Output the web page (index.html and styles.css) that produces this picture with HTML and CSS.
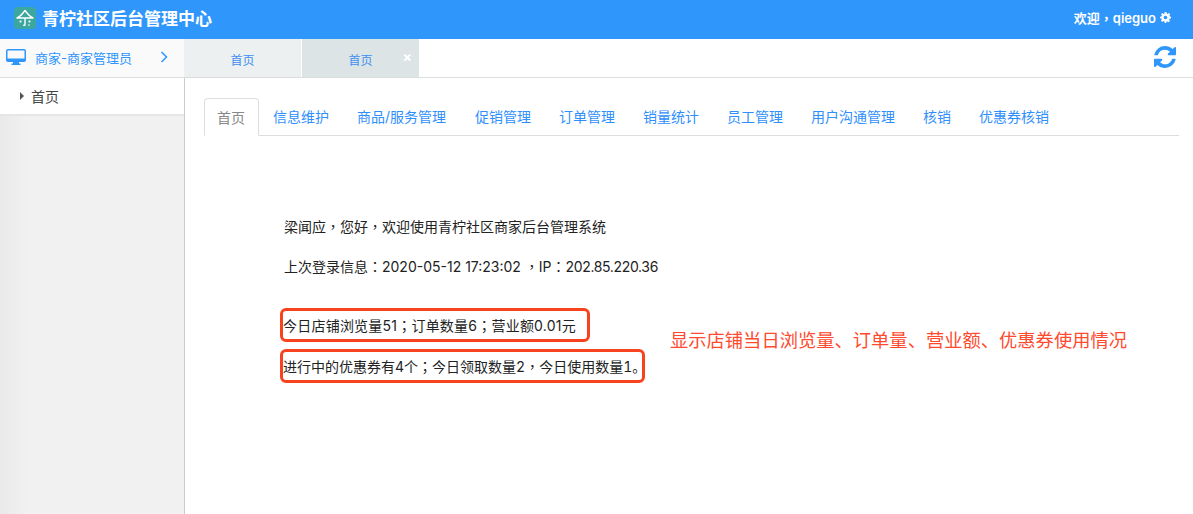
FILE: index.html
```html
<!DOCTYPE html>
<html lang="zh-CN">
<head>
  <meta charset="UTF-8" />
  <title>青柠社区后台管理中心</title>
  <link rel="stylesheet" href="styles.css">
</head>
<body>

  <!-- Top bar -->
  <header class="topbar">
    <div class="brand">
      <svg class="logo" viewBox="0 0 22 22" width="22" height="22">
        <rect width="22" height="22" rx="4" fill="#3ba79f"/>
        <path d="M3 11 Q6.500 9.500 11 3.500 Q15.500 9.500 19 11 Z" fill="none" stroke="#fff" stroke-width="1.400" stroke-linejoin="round"/>
        <path d="M11 11 V17.500 Q11 18.800 9.300 18" fill="none" stroke="#fff" stroke-width="1.400"/>
        <circle cx="6.500" cy="14.500" r="1.100" fill="#fff"/>
        <circle cx="15.500" cy="14.500" r="1.100" fill="#fff"/>
        <circle cx="15" cy="18" r="0.800" fill="#fff"/>
      </svg>
      <span>青柠社区后台管理中心</span>
    </div>
    <div class="welcome">
      <span>欢迎<span lang="zh-TW">，</span>qieguo</span>
      <svg viewBox="0 0 24 24" width="11" height="11">
        <path fill="#fff" fill-rule="evenodd" d="M10 0h4l.6 3.200 2.200.9L19.500 2.300l2.800 2.800-1.800 2.700.9 2.200L24 10.600v3.400l-3.200.6-.9 2.200 1.800 2.700-2.800 2.800-2.700-1.800-2.200.9L13.400 24h-3l-.6-3.200-2.200-.9-2.700 1.800-2.800-2.800 1.800-2.700-.9-2.200L0 13.400v-3l3.200-.6.900-2.200L2.300 5.100l2.800-2.800 2.700 1.800 2.200-.9zM12 8a4 4 0 1 0 0 8 4 4 0 0 0 0-8z"/>
      </svg>
    </div>
  </header>

  <!-- Second row: role + open pages -->
  <div class="subbar">
    <div class="role">
      <svg viewBox="0 0 20 18" width="20" height="18">
        <path fill="#2f96fc" fill-rule="evenodd" d="M2 1h16a2 2 0 0 1 2 2v9a2 2 0 0 1-2 2h-5v1.500h1.500V17h-9v-1.500H7V14H2a2 2 0 0 1-2-2V3a2 2 0 0 1 2-2zm0 1.600a.5.5 0 0 0-.5.5V10.500h17V3.100a.5.5 0 0 0-.5-.5z"/>
      </svg>
      <span class="role-name">商家-商家管理员</span>
      <svg class="chevron" viewBox="0 0 8 12" width="8" height="12">
        <path d="M1.500 1 L6.500 6 L1.500 11" fill="none" stroke="#2f96fc" stroke-width="1.500"/>
      </svg>
    </div>
    <div class="page-tab">首页</div>
    <div class="page-tab active">首页<span class="close">×</span></div>
    <div class="refresh">
      <svg viewBox="0 0 1536 1536" width="22" height="22">
        <path fill="#2f96fc" d="M1511 928q0 5-1 7-64 268-268 434.500T764 1536q-146 0-282.500-55T238 1324l-129 129q-19 19-45 19t-45-19-19-45V960q0-26 19-45t45-19h448q26 0 45 19t19 45-19 45L420 1142q71 66 161 102t187 36q134 0 250-65t186-179q11-17 53-117 8-23 30-23h192q13 0 22.500 9.500t9.500 22.500zm25-800v448q0 26-19 45t-45 19h-448q-26 0-45-19t-19-45 19-45l138-138q-148-137-349-137-134 0-250 65T332 500q-11 17-53 117-8 23-30 23H50q-13 0-22.500-9.500T18 608v-7q65-268 270-434.500T768 0q146 0 284 55.500T1297 212l130-129q19-19 45-19t45 19 19 45z"/>
      </svg>
    </div>
  </div>

  <div class="main">
    <!-- Sidebar -->
    <aside class="sidebar">
      <div class="side-item"><span class="arrow"></span>首页</div>
    </aside>

    <!-- Content -->
    <section class="content">
      <ul class="tabs">
        <li class="active">首页</li>
        <li>信息维护</li>
        <li class="wide">商品/服务管理</li>
        <li>促销管理</li>
        <li>订单管理</li>
        <li>销量统计</li>
        <li>员工管理</li>
        <li>用户沟通管理</li>
        <li>核销</li>
        <li>优惠券核销</li>
      </ul>

      <div class="info">
        <p class="greeting">梁闻应<span lang="zh-TW">，</span>您好<span lang="zh-TW">，</span>欢迎使用青柠社区商家后台管理系统</p>
        <p class="login">上次登录信息<span lang="zh-TW">：</span>2020-05-12 17:23:02 <span lang="zh-TW">，</span>IP<span lang="zh-TW">：</span><span class="ip">202.85.220.36</span></p>

        <div class="stats">
          <div class="stat-lines">
            <div class="stat stat-a"><span>今日店铺浏览量51<span lang="zh-TW">；</span>订单数量6<span lang="zh-TW">；</span>营业额0.01元</span></div>
            <div class="stat stat-b"><span>进行中的优惠券有4个<span lang="zh-TW">；</span>今日领取数量2<span lang="zh-TW">，</span>今日使用数量1。</span></div>
          </div>
          <div class="note">显示店铺当日浏览量、订单量、营业额、优惠券使用情况</div>
        </div>
      </div>
    </section>
  </div>

</body>
</html>
```

FILE: styles.css
```css
* {
  box-sizing: border-box;
}

html,
body {
  height: 100%;
}

body {
  margin: 0;
  display: flex;
  flex-direction: column;
  overflow: hidden;
  font-family: Inter, "Noto Sans CJK SC", sans-serif;
  font-size: 14px;
  color: #333;
  background-color: #fff;
}

.topbar {
  height: 39px;
  flex: none;
  display: flex;
  align-items: center;
  justify-content: space-between;
  padding: 0 22px 4px 14px;
  background-color: #2f96fc;
  color: #fff;
}

.brand {
  display: flex;
  align-items: center;
  gap: 6px;
  font-size: 17px;
  font-weight: bold;
}

.logo {
  display: block;
}

.welcome {
  display: flex;
  align-items: center;
  gap: 4px;
  font-size: 13px;
  font-weight: 600;
}

.subbar {
  height: 39px;
  flex: none;
  display: flex;
  border-bottom: 1px solid #ddd;
}

.role {
  width: 184px;
  display: flex;
  align-items: center;
  padding: 0 16px 2px 6px;
  background-color: #fafafa;
  font-size: 13px;
  color: #2f96fc;
}

.role-name {
  flex: 1;
  margin-left: 9px;
}

.page-tab {
  position: relative;
  width: 118px;
  display: flex;
  align-items: center;
  justify-content: center;
  padding-top: 2px;
  background-color: #ecf0f1;
  border-right: 1px solid #fff;
  font-size: 12px;
  color: #3f8ff0;
}

.page-tab.active {
  width: 117px;
  border-right: none;
  background-color: #dce4e6;
}

.close {
  position: absolute;
  top: 10px;
  right: 7px;
  font-size: 14px;
  line-height: 16px;
  font-weight: bold;
  color: #fff;
}

.refresh {
  margin-left: auto;
  display: flex;
  align-items: center;
  padding: 0 17px 2px 0;
}

.main {
  flex: 1;
  display: flex;
  min-height: 0;
}

.sidebar {
  width: 185px;
  flex: none;
  background: linear-gradient(to right, #e9e9e9, #f1f1f1 28px);
  border-right: 1px solid #ccc;
}

.side-item {
  height: 38px;
  display: flex;
  align-items: center;
  padding-left: 20px;
  padding-bottom: 1px;
  background-color: #fff;
  border-bottom: 2px solid #e6e6e6;
  color: #444;
}

.arrow {
  width: 0;
  height: 0;
  margin-right: 7px;
  border-style: solid;
  border-width: 4px 0 4px 4px;
  border-color: transparent transparent transparent #555;
}

.content {
  flex: 1;
  min-width: 0;
  padding: 20px 14px 0 19px;
}

.tabs {
  display: flex;
  height: 38px;
  margin: 0;
  padding: 0;
  list-style-type: none;
  border-bottom: 1px solid #ddd;
}

.tabs li {
  height: 38px;
  padding: 0 14px;
  line-height: 38px;
  color: #2f8ffc;
}

.tabs li.wide {
  padding-right: 15px;
}

.tabs li.active {
  width: 55px;
  padding: 0 1px 0 0;
  text-align: center;
  color: #888;
  background-color: #fff;
  border: 1px solid #ddd;
  border-bottom-color: #fff;
  border-radius: 4px 4px 0 0;
}

.info {
  padding: 81px 0 0 80px;
  color: #222;
}

.info p {
  margin: 0;
  line-height: 20px;
}

.info p.login {
  margin-top: 20px;
}

.ip {
  letter-spacing: -0.35px;
}

.stats {
  display: flex;
  align-items: center;
  margin-top: 31px;
}

.stat-lines {
  display: flex;
  flex-direction: column;
  gap: 7px;
  align-items: flex-start;
}

.stat {
  height: 34px;
  display: flex;
  align-items: center;
  white-space: nowrap;
  border: 3px solid #f8431f;
  border-radius: 6px;
  margin-left: -4px;
}

.stat-a {
  width: 310px;
  letter-spacing: 0.22px;
}

.stat-b {
  width: 365px;
  font-variant-numeric: tabular-nums;
}

.note {
  margin-left: 25px;
  margin-bottom: 13px;
  font-size: 18.3px;
  color: #ff4a2e;
}
```
